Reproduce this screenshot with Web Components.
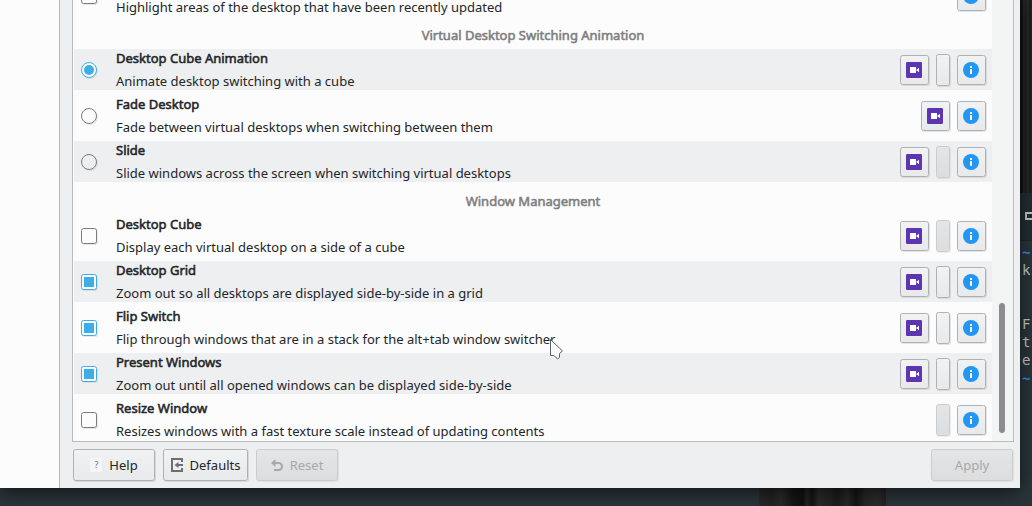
<!DOCTYPE html>
<html lang="en">
<head>
<meta charset="utf-8">
<title>Desktop Effects</title>
<style>
html,body{margin:0;height:100%;overflow:hidden}
body{font:13px/18px "Noto Sans",sans-serif;color:#232629;background:#2a353a}
</style>
</head>
<body>
<desk-top></desk-top>
<script>
const define = (name, html, setup) => {
  const t = document.createElement('template');
  t.innerHTML = html;
  customElements.define(name, class extends HTMLElement {
    constructor() {
      super();
      this.attachShadow({mode: 'open'}).append(t.content.cloneNode(true));
    }
    connectedCallback() { if (setup) setup(this, this.shadowRoot); }
  });
};

define('push-button', `
<style>
:host{display:flex;align-items:center;justify-content:center;box-sizing:border-box;border:1px solid #b0b1b3;border-radius:2.5px;
background:linear-gradient(#f1f2f3,#e8e9ea);box-shadow:1px 1px 0 #00000018;width:29px;height:30px;flex:none}
:host([kind=icon]){justify-content:flex-start;padding-left:5px}
:host([kind=config]){width:14px;height:32px}
:host([disabled]){background:linear-gradient(#e4e5e6,#dcddde);border-color:#cbccce;box-shadow:1px 1px 0 #00000010;color:#a6a8ab}
:host([kind=text]){width:82px;height:32px;gap:7px}
:host([wide]){width:85px}
</style><slot></slot>`);

define('video-icon', `
<style>:host{display:block;width:16px;height:16px}svg{display:block}</style>
<svg width="16" height="16"><rect width="16" height="16" rx="1.2" fill="#5e35b1"/><path d="M4 5h6v6H4zM10 8l3-2.200v4.400z" fill="#fff"/></svg>`);

define('info-icon', `
<style>:host{display:block;width:16px;height:16px}svg{display:block}</style>
<svg width="16" height="16"><circle cx="8" cy="8" r="8" fill="#2196f3"/><path d="M7 4h2v2H7zM7 7h2v5H7z" fill="#fff"/></svg>`);

define('toggle-mark', `
<style>
:host{display:grid;place-items:center;box-sizing:border-box;width:16px;height:16px;border:1px solid #7a7c7e;border-radius:2.5px;background:#fcfcfc;box-shadow:1px 1px 0 #00000014}
:host([kind=radio]){border-radius:50%}
:host([kind=radio]:not([on])){background:transparent}
:host([on]){border-color:#3daee9}
:host([on])::before{content:"";width:10px;height:10px;background:#3daee9}
:host([kind=radio][on])::before{border-radius:50%}
</style>`);

define('effect-row', `
<style>
:host{display:flex;align-items:center;height:41px;flex:none;box-sizing:border-box;padding:0 6px 0 7px}
:host([alt]){background:#eeeff1}
toggle-mark{margin:1px 19px 0 0}
.text{flex:1;display:grid;grid-template-rows:18px 18px;row-gap:5px;white-space:nowrap}
.title{-webkit-text-stroke:.55px currentColor}
.actions{display:flex;align-items:center;gap:7px;padding-top:1px}
</style>
<toggle-mark></toggle-mark>
<div class="text"><span class="title"></span><span class="desc"><slot></slot></span></div>
<div class="actions"></div>`, (el, root) => {
  const mark = root.querySelector('toggle-mark');
  mark.setAttribute('kind', el.getAttribute('kind') || 'check');
  mark.toggleAttribute('on', el.hasAttribute('on'));
  root.querySelector('.title').textContent = el.getAttribute('name');
  const config = el.getAttribute('config');
  root.querySelector('.actions').innerHTML =
    (el.hasAttribute('video') ? '<push-button kind="icon"><video-icon></video-icon></push-button>' : '') +
    (config ? `<push-button kind="config" ${config === 'off' ? 'disabled' : ''}></push-button>` : '') +
    '<push-button kind="icon"><info-icon></info-icon></push-button>';
});

define('section-title', `
<style>:host{display:block;height:23px;line-height:18px;padding-top:5px;box-sizing:border-box;flex:none;text-align:center;color:#7e7f80;-webkit-text-stroke:.55px currentColor}</style><slot></slot>`);

define('scroll-track', `
<style>:host{display:flex;flex-direction:column;justify-content:flex-end;align-items:center;box-sizing:border-box;width:21px;padding:0 1px 8px 0;background:#f3f4f4}
i{width:6px;height:130px;border-radius:3px;background:#8b8c8e}</style><i></i>`);

define('effect-list', `
<style>
:host{display:flex;height:442px;box-sizing:border-box;overflow:hidden;border:1px solid #b9bbbd;border-top:0;background:#fcfcfc}
.rows{flex:1;height:440px;padding-left:1px;display:flex;flex-direction:column;justify-content:flex-end;gap:5px}
</style>
<div class="rows"><slot></slot></div><scroll-track></scroll-track>`);

define('settings-window', `
<style>
:host{display:flex;box-sizing:border-box;width:1020px;height:488px;background:#eeeff1;box-shadow:0 4px 18px #0009}
.side{width:59px;background:#fcfcfc;border-right:1px solid #b5b7b9}
.main{flex:1;padding:0 6px 0 12px}
footer{display:flex;gap:8px;padding:7px 1px 0;align-items:flex-start}
.grow{flex:1}
svg{flex:none}
.q{width:12px;height:14px;background:#f5f5f5;color:#777;font-size:9px;line-height:14px;text-align:center}
</style>
<div class="side"></div>
<div class="main">
<effect-list>
<effect-row name="">Highlight areas of the desktop that have been recently updated</effect-row>
<section-title>Virtual Desktop Switching Animation</section-title>
<effect-row alt kind="radio" on video config="on" name="Desktop Cube Animation">Animate desktop switching with a cube</effect-row>
<effect-row kind="radio" video name="Fade Desktop">Fade between virtual desktops when switching between them</effect-row>
<effect-row alt kind="radio" video config="off" name="Slide">Slide windows across the screen when switching virtual desktops</effect-row>
<section-title>Window Management</section-title>
<effect-row video config="off" name="Desktop Cube">Display each virtual desktop on a side of a cube</effect-row>
<effect-row alt on video config="on" name="Desktop Grid">Zoom out so all desktops are displayed side-by-side in a grid</effect-row>
<effect-row on video config="on" name="Flip Switch">Flip through windows that are in a stack for the alt+tab window switcher</effect-row>
<effect-row alt on video config="on" name="Present Windows">Zoom out until all opened windows can be displayed side-by-side</effect-row>
<effect-row config="off" name="Resize Window">Resizes windows with a fast texture scale instead of updating contents</effect-row>
</effect-list>
<footer>
<push-button kind="text"><span class="q">?</span>Help</push-button>
<push-button kind="text" wide><svg width="12" height="14"><path d="M11 4V1H1v12h10v-3" fill="none" stroke="#6c6e70" stroke-width="2"/><path d="M3.500 7l4-3v2H12v2H7.500v2z" fill="#6c6e70"/></svg>Defaults</push-button>
<push-button kind="text" disabled><svg width="12" height="13"><path d="M2 4h5.500a3.500 3.500 0 0 1 0 7H3" fill="none" stroke="#a6a8ab" stroke-width="2"/><path d="M0 4l4.500-4v8z" fill="#a6a8ab"/></svg>Reset</push-button>
<span class="grow"></span>
<push-button kind="text" disabled>Apply</push-button>
</footer>
</div>`);

define('terminal-edge', `
<style>
:host{display:flex;flex-direction:column;width:12px;height:506px;overflow:hidden;font:14px/18px "DejaVu Sans Mono",monospace;color:#c4c8ca;background:#2a353a}
.wood{height:193px;flex:none;background:linear-gradient(90deg,#111 0 2px,#292929 4px,#1b1b1b 6px,#2c2c2c 8px,#181818 10px,#272727)}
.bar{height:48px;flex:none;background:#232d32;border-bottom:1px solid #1f282c;display:flex;box-sizing:border-box;padding:19px 0 0 5px}
.bar i{box-sizing:border-box;flex:none;width:9px;height:8px;border:2px solid #c3c8ca}
pre{margin:2px 0 0 2px;font:inherit}
b{color:#2b94e8}
</style>
<div class="wood"></div><div class="bar"><i></i></div>
<pre><b>~</b>
k


F
t
e
<b>~</b></pre>`);

define('desk-top', `
<style>
:host{display:grid;grid-template-columns:1020px 12px;grid-template-rows:488px 18px;width:1032px;height:506px;position:relative;overflow:hidden;background:#2a353a}
settings-window{z-index:1}
terminal-edge{grid-column:2;grid-row:1/3}
.floor{grid-column:1;grid-row:2;display:flex;padding-left:759px;background:#2a353a}
.plank{width:127px;background:linear-gradient(90deg,#292929,#222 12px,#2b2b2b 22px,#161616 34px,#101010 44px,#242424 48px,#141414 53px,#2a2a2a 60px,#232323 72px,#1b1b1b 78px,#292929 88px,#141414 97px,#262626 106px,#2c2c2c 118px,#222)}
.pointer{position:absolute;left:549px;top:338px;z-index:2}
</style>
<settings-window></settings-window><terminal-edge></terminal-edge>
<div class="floor"><div class="plank"></div></div>
<svg class="pointer" width="16" height="24"><path d="M1.500 1.500V17.500H5L8.500 21L10.500 19.500V15.500L13.500 13z" fill="#fcfcfc" stroke="#5c6064"/></svg>`);
</script>
</body>
</html>
